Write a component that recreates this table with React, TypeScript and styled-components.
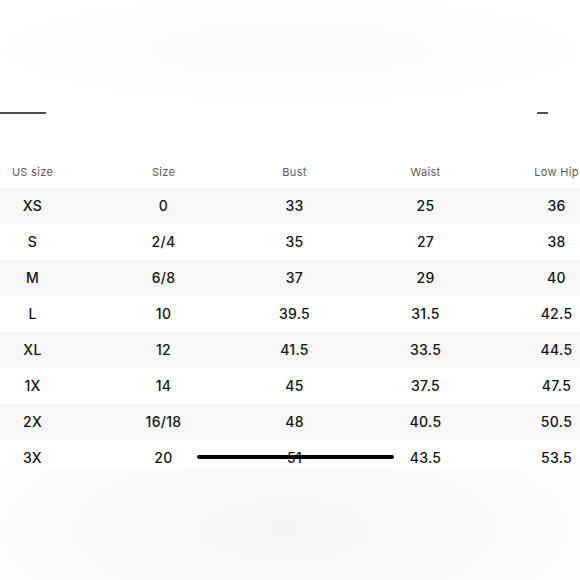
import React from "react";
import styled, { createGlobalStyle } from "styled-components";

const Global = createGlobalStyle`
  html, body { margin: 0; padding: 0; background: #ffffff; }
  body { width: 580px; height: 580px; overflow: hidden; font-family: Inter, "Noto Sans", sans-serif; }
`;

const Page = styled.div`
  position: relative;
  width: 580px;
  height: 580px;
  overflow: hidden;
  display: flex;
  flex-direction: column;
  background: #ffffff;
`;

const TopArea = styled.div`
  height: 152px;
  display: flex;
  flex-direction: column;
  justify-content: flex-start;
  background: radial-gradient(ellipse 320px 60px at 290px 50px, #fbfbfb 0%, #fdfdfd 60%, #ffffff 100%);
`;

const RuleRow = styled.div`
  margin-top: 112px;
  display: flex;
  justify-content: space-between;
  align-items: center;
`;

const Rule = styled.div<{ $w: number; $mr?: number }>`
  width: ${(p) => p.$w}px;
  height: 2px;
  background: #4f4f4f;
  margin-right: ${(p) => p.$mr ?? 0}px;
`;

const Table = styled.div`
  width: 655px;
  margin-left: -33px;
  display: flex;
  flex-direction: column;
`;

const Row = styled.div<{ $shade?: boolean; $head?: boolean }>`
  display: grid;
  grid-template-columns: repeat(5, 1fr);
  height: 36px;
  box-sizing: border-box;
  align-items: center;
  padding: ${(p) => (p.$head ? "4px 0 0" : "0 0 2px")};
  background: ${(p) => (p.$shade ? "#f7f7f7" : "#ffffff")};
  color: ${(p) => (p.$head ? "#5c5c5c" : "#141414")};
  font-size: ${(p) => (p.$head ? "11px" : "14px")};
  font-weight: ${(p) => (p.$head ? 400 : 500)};
`;

const Cell = styled.div`
  text-align: center;
  letter-spacing: 0.3px;
`;

const Fade = styled.div`
  flex: 1;
  margin-top: -8px;
  background: radial-gradient(ellipse 300px 110px at 285px 62px, #f4f4f4 0%, #f7f7f7 35%, #fafafa 65%, #fdfdfd 100%);
`;

const Scrubber = styled.div`
  position: absolute;
  left: 197px;
  top: 455px;
  width: 197px;
  height: 4px;
  border-radius: 2px;
  background: #000;
`;

const header = ["US size", "Size", "Bust", "Waist", "Low Hip"];
const rows = [
  ["XS", "0", "33", "25", "36"],
  ["S", "2/4", "35", "27", "38"],
  ["M", "6/8", "37", "29", "40"],
  ["L", "10", "39.5", "31.5", "42.5"],
  ["XL", "12", "41.5", "33.5", "44.5"],
  ["1X", "14", "45", "37.5", "47.5"],
  ["2X", "16/18", "48", "40.5", "50.5"],
  ["3X", "20", "51", "43.5", "53.5"],
];

export default function App() {
  return (
    <>
      <Global />
      <Page>
        <TopArea>
          <RuleRow>
            <Rule $w={46} />
            <Rule $w={11} $mr={32} />
          </RuleRow>
        </TopArea>
        <Table>
          <Row $head>
            {header.map((h) => (
              <Cell key={h}>{h}</Cell>
            ))}
          </Row>
          {rows.map((r, i) => (
            <Row key={r[0]} $shade={i % 2 === 0}>
              {r.map((c, j) => (
                <Cell key={j}>{c}</Cell>
              ))}
            </Row>
          ))}
        </Table>
        <Fade />
        <Scrubber />
      </Page>
    </>
  );
}
